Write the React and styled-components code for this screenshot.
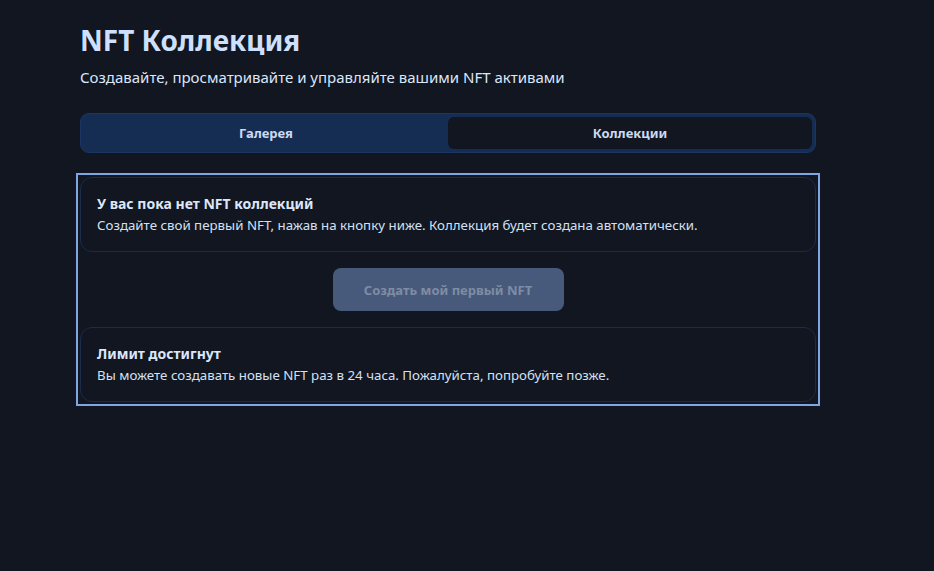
import React from "react";
import styled, { createGlobalStyle } from "styled-components";

const GlobalStyle = createGlobalStyle`
  html, body {
    margin: 0;
    background: #111620;
    font-family: "Noto Sans", "Open Sans", sans-serif;
    color: #e2e8f0;
  }
`

const Page = styled.div`
  min-height: 571px;
  padding: 22px 0 24px 80px;
  box-sizing: border-box;
`

const Content = styled.div`
  width: 736px;
`

const Title = styled.h1`
  margin: 0;
  font-size: 28px;
  line-height: 36px;
  font-weight: 700;
  color: #cfe0ff;
`

const Subtitle = styled.p`
  margin: 9px 0 0;
  font-size: 15px;
  line-height: 20px;
  color: #dbe6fb;
`

const Tabs = styled.div`
  margin-top: 26px;
  display: grid;
  grid-template-columns: 1fr 1fr;
  padding: 3px;
  height: 40px;
  box-sizing: border-box;
  background: #162d53;
  border: 1px solid #1b3663;
  border-radius: 9px;
`

const Tab = styled.button`
  border: none;
  border-radius: 6px;
  font-family: inherit;
  font-size: 13px;
  font-weight: 700;
  color: #cbdaf5;
  background: ${p => (p.$active ? "#111620" : "transparent")};
  cursor: pointer;
`

const Panel = styled.div`
  margin-top: 24px;
  outline: 2px solid #7ea6e0;
  outline-offset: 2px;
  display: flex;
  flex-direction: column;
  gap: 16px;
`

const Card = styled.div`
  border: 1px solid #1a2b4b;
  border-radius: 12px;
  padding: 16px 16px 17px;
`

const CardTitle = styled.div`
  font-size: 14px;
  font-weight: 700;
  line-height: 20px;
  color: #dce7fb;
`

const CardText = styled.div`
  margin-top: 2px;
  font-size: 13.3px;
  line-height: 18px;
  color: #d5e0f3;
`

const Action = styled.button`
  align-self: center;
  width: 231px;
  height: 43px;
  border: none;
  border-radius: 8px;
  background: #475a7b;
  color: #7f8ca3;
  font-family: inherit;
  font-size: 13px;
  font-weight: 700;
`

export default function App() {
  return (
    <Page>
      <GlobalStyle />
      <Content>
        <Title>NFT Коллекция</Title>
        <Subtitle>Создавайте, просматривайте и управляйте вашими NFT активами</Subtitle>
        <Tabs>
          <Tab>Галерея</Tab>
          <Tab $active>Коллекции</Tab>
        </Tabs>
        <Panel>
          <Card>
            <CardTitle>У вас пока нет NFT коллекций</CardTitle>
            <CardText>Создайте свой первый NFT, нажав на кнопку ниже. Коллекция будет создана автоматически.</CardText>
          </Card>
          <Action disabled>Создать мой первый NFT</Action>
          <Card>
            <CardTitle>Лимит достигнут</CardTitle>
            <CardText>Вы можете создавать новые NFT раз в 24 часа. Пожалуйста, попробуйте позже.</CardText>
          </Card>
        </Panel>
      </Content>
    </Page>
  );
}
